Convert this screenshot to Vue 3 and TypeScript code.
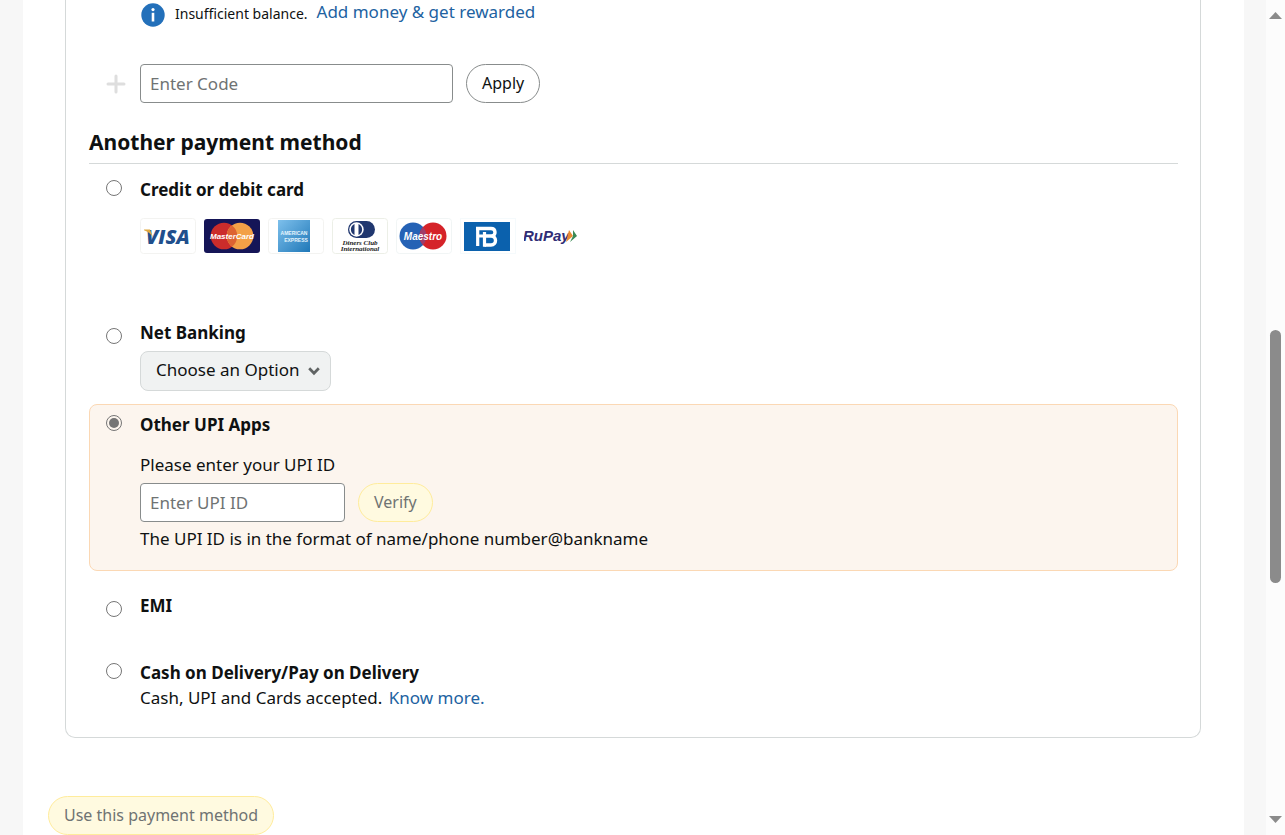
<script setup lang="ts">
import { ref } from 'vue'

type Method = 'card' | 'netbanking' | 'upi' | 'emi' | 'cod'

const method = ref<Method>('upi')
const code = ref('')
const bank = ref('')
const upiId = ref('')
</script>

<template>
  <div class="page">
    <main class="sheet">
      <form class="checkout" @submit.prevent>
        <section class="card">
          <div class="balance">
            <svg class="info" viewBox="0 0 24 24" aria-hidden="true">
              <circle cx="12" cy="12" r="11.7" fill="#2370ba" />
              <circle cx="12" cy="6.6" r="1.6" fill="#fff" />
              <path d="M10.7 9.8h2.6v8.7h-2.6z" fill="#fff" />
            </svg>
            <span class="balance-text">Insufficient balance.</span>
            <a href="#add-money">Add money &amp; get rewarded</a>
          </div>

          <div class="code-row">
            <svg class="plus" viewBox="0 0 20 20" aria-hidden="true">
              <path d="M10 2v16M2 10h16" stroke="#dedede" stroke-width="3" stroke-linecap="round" />
            </svg>
            <input v-model="code" class="field code-field" type="text" placeholder="Enter Code" aria-label="Enter Code" />
            <button class="pill" type="button">Apply</button>
          </div>

          <h2>Another payment method</h2>

          <div class="method method-card">
            <input id="m-card" v-model="method" type="radio" name="method" value="card" />
            <div class="body">
              <label class="title" for="m-card">Credit or debit card</label>
              <div class="logos">
                <svg viewBox="0 0 56 36" role="img" aria-label="Visa">
                  <rect x=".5" y=".5" width="55" height="35" rx="3" fill="#fff" stroke="#f3f3f1" />
                  <text x="6" y="26" class="visa">VISA</text>
                  <path d="M4 11.500h6l3 8C11 16 8 13.400 4 12.200z" fill="#dfa73f" />
                </svg>
                <svg viewBox="0 0 56 36" role="img" aria-label="MasterCard">
                  <rect y="1" width="56" height="34" rx="3" fill="#151557" />
                  <circle cx="20" cy="18" r="13.300" fill="#cb2c2b" />
                  <circle cx="36" cy="18" r="13.300" fill="#f3a047" />
                  <path d="M28 7.400a13.300 13.300 0 0 1 0 21.200a13.300 13.300 0 0 1 0-21.200z" fill="#dd6332" />
                  <text x="28" y="21" text-anchor="middle" class="mc">MasterCard</text>
                </svg>
                <svg viewBox="0 0 56 36" role="img" aria-label="American Express">
                  <defs>
                    <linearGradient id="amex" x1="0" y1="0" x2="1" y2="1">
                      <stop offset="0" stop-color="#7ec0ec" />
                      <stop offset="1" stop-color="#1f78b8" />
                    </linearGradient>
                  </defs>
                  <rect x=".5" y=".5" width="55" height="35" rx="3" fill="#fff" stroke="#f3f3f1" />
                  <rect x="10" y="2" width="32" height="32" fill="url(#amex)" />
                  <text x="26" y="17" text-anchor="middle" class="amex">AMERICAN</text>
                  <text x="28" y="24" text-anchor="middle" class="amex">EXPRESS</text>
                </svg>
                <svg viewBox="0 0 56 36" role="img" aria-label="Diners Club International">
                  <rect x=".5" y=".5" width="55" height="35" rx="3" fill="#fff" stroke="#ecefe7" />
                  <rect x="16" y="3" width="27" height="17" rx="8.500" fill="#20376f" />
                  <circle cx="24.500" cy="11.500" r="7.200" fill="#fff" />
                  <path d="M22.500 6a6 6 0 0 0 0 11zM26.500 6a6 6 0 0 1 0 11z" fill="#20376f" />
                  <text x="28" y="27" text-anchor="middle" class="diners">Diners Club</text>
                  <text x="28" y="33" text-anchor="middle" class="diners">International</text>
                </svg>
                <svg viewBox="0 0 56 36" role="img" aria-label="Maestro">
                  <rect x=".5" y=".5" width="55" height="35" rx="3" fill="#fff" stroke="#f1f5f5" />
                  <circle cx="17" cy="18" r="13.500" fill="#2562b5" />
                  <circle cx="37" cy="18" r="13.500" fill="#d52329" />
                  <path d="M27 9a13.500 13.500 0 0 1 0 18a13.500 13.500 0 0 1 0-18z" fill="#a03b69" />
                  <text x="27" y="22" text-anchor="middle" class="maestro">Maestro</text>
                </svg>
                <svg viewBox="0 0 56 36" role="img" aria-label="Bajaj Finserv">
                  <rect x=".5" y=".5" width="55" height="35" fill="#fff" stroke="#f5fafc" />
                  <rect x="4" y="4" width="46" height="29" fill="#0b61ad" />
                  <path d="M16 10.500h15c5 0 5.500 7 .5 7.500h-7M31 18c6 0 6 9 0 9h-6.500" fill="none" stroke="#fff" stroke-width="3.400" />
                  <path d="M17.700 9v19M17.700 18H25M24.500 14v14.700" fill="none" stroke="#fff" stroke-width="3.200" />
                </svg>
                <svg viewBox="0 0 56 36" role="img" aria-label="RuPay">
                  <text x="-1" y="23" class="rupay">RuPay</text>
                  <path d="M45 12l4 6-7 6z" fill="#e98a32" />
                  <path d="M49 12l4 6-7 6 3-6z" fill="#3b8a55" />
                </svg>
              </div>
            </div>
          </div>

          <div class="method method-net low">
            <input id="m-net" v-model="method" type="radio" name="method" value="netbanking" />
            <div class="body">
              <label class="title" for="m-net">Net Banking</label>
              <div class="select">
                <select v-model="bank" aria-label="Net Banking">
                  <option value="">Choose an Option</option>
                </select>
                <svg viewBox="0 0 14 10" aria-hidden="true">
                  <path d="M2.200 2.200L7 7.200l4.800-5" fill="none" stroke="#606464" stroke-width="2.700" />
                </svg>
              </div>
            </div>
          </div>

          <div class="method method-upi" :class="{ chosen: method === 'upi' }">
            <input id="m-upi" v-model="method" type="radio" name="method" value="upi" />
            <div class="body">
              <label class="title" for="m-upi">Other UPI Apps</label>
              <label class="upi-label" for="upi-id">Please enter your UPI ID</label>
              <div class="upi-row">
                <input id="upi-id" v-model="upiId" class="field upi-field" type="text" placeholder="Enter UPI ID" />
                <button class="pill yellow" type="button" disabled>Verify</button>
              </div>
              <p>The UPI ID is in the format of name/phone number@bankname</p>
            </div>
          </div>

          <div class="method method-emi low">
            <input id="m-emi" v-model="method" type="radio" name="method" value="emi" />
            <div class="body">
              <label class="title" for="m-emi">EMI</label>
            </div>
          </div>

          <div class="method method-cod">
            <input id="m-cod" v-model="method" type="radio" name="method" value="cod" />
            <div class="body">
              <label class="title" for="m-cod">Cash on Delivery/Pay on Delivery</label>
              <p class="cod-note">Cash, UPI and Cards accepted. <a href="#know-more">Know more.</a></p>
            </div>
          </div>
        </section>

        <button class="pill yellow submit" type="submit" disabled>Use this payment method</button>
      </form>
    </main>

    <div class="scrollbar" aria-hidden="true">
      <svg viewBox="0 0 13 7"><path d="M6.500 0L13 7H0z" fill="#8b8b8b" /></svg>
      <div class="track"><div class="thumb"></div></div>
      <svg viewBox="0 0 13 7"><path d="M0 0h13L6.500 7z" fill="#8b8b8b" /></svg>
    </div>
  </div>
</template>

<style>
body {
  margin: 0;
  background: #f7f7f7;
}
</style>

<style scoped>
* {
  box-sizing: border-box;
}

.page {
  display: flex;
  height: 100vh;
  overflow: hidden;
  color: #0f1111;
  font-family: "Noto Sans", "Open Sans", sans-serif;
  font-size: 17px;
  line-height: 24px;
}

.sheet {
  flex: 1;
  min-width: 0;
  margin: 0 22px 0 23px;
  padding: 0 25px;
  background: #fff;
}

.card {
  margin: 0 18px 58px 17px;
  padding: 0 22px 26px 23px;
  border: 1px solid #d5d9d9;
  border-top: 0;
  border-radius: 0 0 10px 10px;
}

a {
  color: #2162a1;
  text-decoration: none;
}

.balance {
  display: flex;
  align-items: flex-start;
  height: 64px;
  padding-left: 52px;
}

.balance a {
  margin-left: 9px;
}

.balance-text {
  font-size: 14px;
  line-height: 28px;
}

.info {
  width: 24px;
  height: 24px;
  margin: 3px 10px 0 0;
}

.code-row,
.upi-row {
  display: flex;
  gap: 13px;
}

.code-row {
  align-items: center;
  padding-left: 17px;
}

.plus {
  width: 20px;
  height: 20px;
  margin-right: 1px;
}

.field {
  height: 39px;
  padding: 0 9px;
  border: 1px solid #888c8c;
  border-radius: 4px;
  background: #fff;
  color: #0f1111;
  font: inherit;
}

.field::placeholder {
  color: #6f7373;
  opacity: 1;
}

.code-field {
  width: 313px;
}

.upi-field {
  width: 205px;
}

.pill {
  height: 39px;
  padding: 0 15px 1px;
  border: 1px solid #888c8c;
  border-radius: 20px;
  background: #fff;
  color: #0f1111;
  font: inherit;
  font-size: 16px;
}

.yellow {
  border-color: #ffec9c;
  background: #fffae0;
  color: #6f7373;
}

.submit {
  display: block;
}

h2 {
  margin: 24px 0 0;
  padding-bottom: 6px;
  border-bottom: 1px solid #d5d9d9;
  font-size: 21px;
  line-height: 30px;
}

.method {
  display: flex;
  gap: 18px;
  padding: 0 16px;
  border: 1px solid transparent;
  border-radius: 8px;
}

.method > input {
  flex: none;
  appearance: none;
  width: 16px;
  height: 16px;
  margin: 2px 0 0;
  border: 1px solid #767676;
  border-radius: 50%;
  background: #fff;
}

.method > input:checked {
  padding: 2px;
  background: #757575 content-box;
}

.low > input {
  margin-top: 7px;
}

.title {
  display: block;
  width: fit-content;
  font-weight: 700;
}

.method-card {
  padding-top: 13px;
}

.logos {
  display: flex;
  gap: 8px;
  margin: 16px 0 65px;
}

.logos svg {
  width: 56px;
  height: 36px;
}

.visa {
  font: italic 800 20px "Open Sans", sans-serif;
  fill: #214f8c;
}

.mc {
  font: italic 700 8px "Liberation Sans", sans-serif;
  fill: #fff;
}

.amex {
  font: 700 5px "Liberation Sans", sans-serif;
  fill: #e5f4fc;
}

.diners {
  font: italic 700 7px "Liberation Serif", serif;
  fill: #222;
}

.maestro {
  font: italic 700 10px "Liberation Sans", sans-serif;
  fill: #fff;
}

.rupay {
  font: italic 700 15px "Liberation Sans", sans-serif;
  fill: #302d75;
}

.select {
  position: relative;
  width: 191px;
  margin: 6px 0 12px;
}

.select select {
  display: block;
  appearance: none;
  width: 100%;
  height: 40px;
  padding: 0 30px 2px 15px;
  border: 1px solid #d5d9d9;
  border-radius: 8px;
  background: #f0f2f2;
  color: #0f1111;
  font: inherit;
}

.select svg {
  position: absolute;
  top: 15px;
  right: 10px;
  width: 14px;
  height: 10px;
  pointer-events: none;
}

.method-upi {
  padding-top: 8px;
  padding-bottom: 19px;
}

.chosen {
  border-color: #fbd8b4;
  background: #fcf5ee;
}

.upi-label {
  display: block;
  margin: 16px 0 6px;
}

p {
  margin: 5px 0 0;
}

.method-emi {
  padding-top: 22px;
}

.method-cod {
  padding-top: 41px;
}

.method .cod-note {
  margin: 1px 0 0;
}

.cod-note a {
  margin-left: 2px;
}

.scrollbar {
  display: flex;
  flex: none;
  flex-direction: column;
  align-items: center;
  width: 19px;
  padding: 12px 0;
  background: #fcfcfc;
}

.scrollbar svg {
  width: 13px;
  height: 7px;
}

.track {
  display: grid;
  flex: 1;
  grid-template-rows: 311fr 253fr 233fr;
}

.thumb {
  grid-row: 2;
  width: 11px;
  border-radius: 6px;
  background: #8b8b8b;
}
</style>
